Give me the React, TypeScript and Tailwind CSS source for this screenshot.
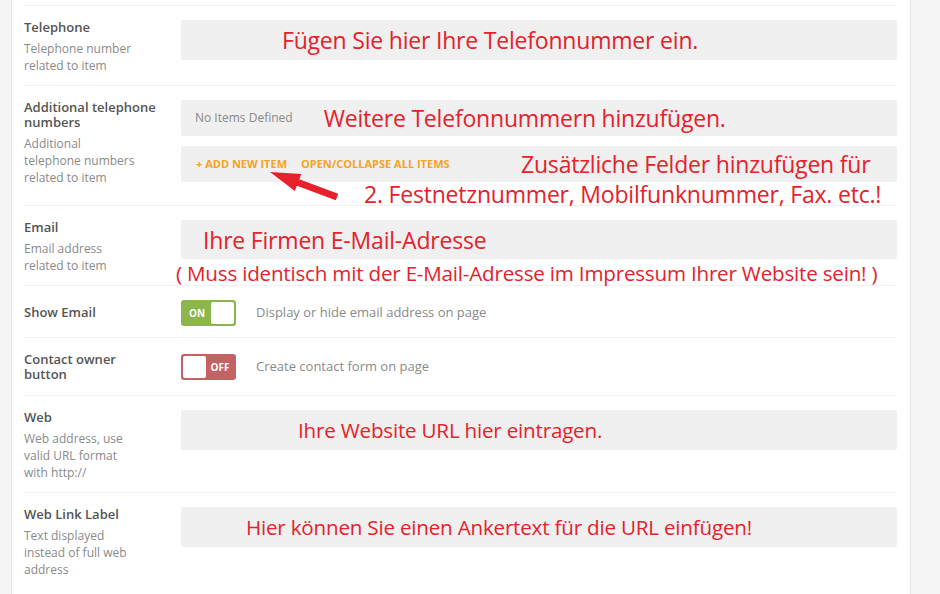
import type { ReactNode } from 'react';

const ui = { fontFamily: '"Open Sans", "Noto Sans", Arial, sans-serif' };
const note = { fontFamily: '"Open Sans", "Noto Sans", Arial, sans-serif' };

type FieldRowProps = {
  title: ReactNode;
  desc?: string[];
  className?: string;
  children: ReactNode;
};

function FieldRow({ title, desc, className = '', children }: FieldRowProps) {
  return (
    <div className={`flex border-t border-[#efefef] pt-[14px] ${className}`}>
      <div className="w-[157px] shrink-0">
        <p className="w-[134px] text-[13px] font-semibold leading-[15px] text-[#555]">{title}</p>
        {desc && (
          <p className="mt-[5px] text-[12px] leading-[17px] text-[#8a8a8a]">
            {desc.map((line) => (
              <span key={line} className="block whitespace-nowrap">
                {line}
              </span>
            ))}
          </p>
        )}
      </div>
      <div className="min-w-0 flex-1">{children}</div>
    </div>
  );
}

function Annotation({ children, small, className = '' }: { children: ReactNode; small?: boolean; className?: string }) {
  return (
    <span
      style={note}
      className={`whitespace-nowrap leading-[24px] tracking-[-0.2px] text-[#e6212b] ${
        small ? 'text-[20.6px]' : 'text-[23px]'
      } ${className}`}
    >
      {children}
    </span>
  );
}

function Toggle({ on }: { on: boolean }) {
  return (
    <div
      className={`flex h-[26px] w-[55px] items-center rounded-[3px] p-[2px] ${
        on ? 'bg-[#8cb54c]' : 'flex-row-reverse bg-[#c26262]'
      }`}
    >
      <span className="flex-1 text-center text-[10px] font-bold text-white">{on ? 'ON' : 'OFF'}</span>
      <span className="h-[22px] w-[23px] rounded-[2px] bg-white" />
    </div>
  );
}

export default function App() {
  return (
    <div style={ui} className="relative flex h-[594px] w-[940px] overflow-hidden bg-[#f5f5f5]">
      <div className="w-[12px] shrink-0 border-r border-[#e3e3e3]" />

      <main className="w-[899px] shrink-0 border-r border-[#e3e3e3] bg-white pl-[12px] pr-[13px] pt-[5px]">
        <FieldRow title="Telephone" desc={['Telephone number', 'related to item']} className="pb-[11px]">
          <div className="flex h-[40px] items-center rounded-[2px] bg-[#f0f0f0] pl-[101px]">
            <Annotation>Fügen Sie hier Ihre Telefonnummer ein.</Annotation>
          </div>
        </FieldRow>

        <FieldRow
          title="Additional telephone numbers"
          desc={['Additional', 'telephone numbers', 'related to item']}
          className="pb-[1px]"
        >
          <div className="flex h-[36px] items-center rounded-[2px] bg-[#f0f0f0] pl-[14px]">
            <span className="text-[12px] text-[#888]">No Items Defined</span>
            <Annotation className="ml-[31px]">Weitere Telefonnummern hinzufügen.</Annotation>
          </div>
          <div className="mt-[10px] flex h-[36px] items-center rounded-[2px] bg-[#f0f0f0] pl-[15px]">
            <div className="flex w-[325px] gap-[14px] text-[11px] font-bold text-[#f5a21e]">
              <span>+ ADD NEW ITEM</span>
              <span>OPEN/COLLAPSE ALL ITEMS</span>
            </div>
            <Annotation>Zusätzliche Felder hinzufügen für</Annotation>
          </div>
          <div className="h-[22px] pl-[183px] leading-[22px]">
            <Annotation>2. Festnetznummer, Mobilfunknummer, Fax. etc.!</Annotation>
          </div>
        </FieldRow>

        <FieldRow title="Email" desc={['Email address', 'related to item']} className="pb-0">
          <div className="flex h-[39px] items-center rounded-[2px] bg-[#f0f0f0] pl-[22px]">
            <Annotation>Ihre Firmen E-Mail-Adresse</Annotation>
          </div>
          <div className="-ml-[5px] mt-[2px] h-[24px]">
            <Annotation small>( Muss identisch mit der E-Mail-Adresse im Impressum Ihrer Website sein! )</Annotation>
          </div>
        </FieldRow>

        <FieldRow title={<span className="block pt-[5px]">Show Email</span>} className="pb-[11px]">
          <div className="flex items-center gap-[20px]">
            <Toggle on />
            <span className="text-[13px] text-[#8a8a8a]">Display or hide email address on page</span>
          </div>
        </FieldRow>

        <FieldRow title="Contact owner button" className="pb-[13px]">
          <div className="mt-[2px] flex items-center gap-[20px]">
            <Toggle on={false} />
            <span className="text-[13px] text-[#8a8a8a]">Create contact form on page</span>
          </div>
        </FieldRow>

        <FieldRow title="Web" desc={['Web address, use', 'valid URL format', 'with http://']} className="pb-[11px]">
          <div className="flex h-[40px] items-center rounded-[2px] bg-[#f0f0f0] pl-[117px]">
            <Annotation small>Ihre Website URL hier eintragen.</Annotation>
          </div>
        </FieldRow>

        <FieldRow
          title="Web Link Label"
          desc={['Text displayed', 'instead of full web', 'address']}
          className="pb-[11px]"
        >
          <div className="flex h-[40px] items-center rounded-[2px] bg-[#f0f0f0] pl-[65px]">
            <Annotation small>Hier können Sie einen Ankertext für die URL einfügen!</Annotation>
          </div>
        </FieldRow>
      </main>

      <div className="flex-1" />

      {/* red arrow pointing at the add button */}
      <svg className="pointer-events-none absolute left-0 top-0" width="940" height="594">
        <polygon
          points="270,172 301.3,174.1 299.3,179.2 338.2,193.7 335.8,200.3 296.9,185.8 294.9,190.9"
          fill="#e6212b"
        />
      </svg>
    </div>
  );
}
